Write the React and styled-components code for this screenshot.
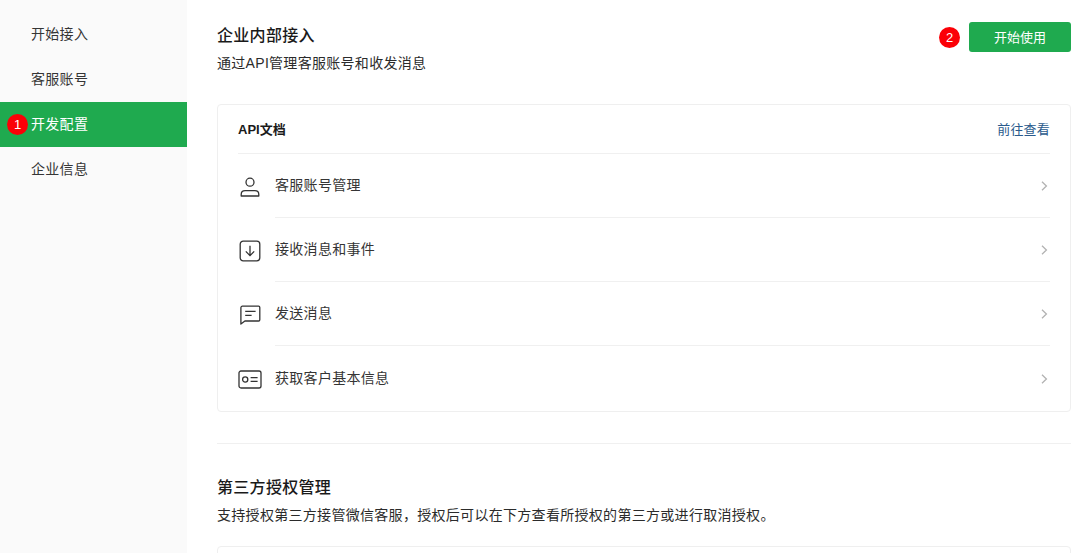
import styled, { createGlobalStyle } from "styled-components";

const GlobalStyle = createGlobalStyle`
  html, body {
    margin: 0;
    padding: 0;
    background: #fff;
    overflow: hidden;
  }
  body {
    font-family: "Liberation Sans", "Noto Sans CJK SC", sans-serif;
    color: #1a1a1a;
  }
`;

const navItems = ["开始接入", "客服账号", "开发配置", "企业信息"];

const apiRows = [
  { label: "客服账号管理", icon: <UserIcon /> },
  { label: "接收消息和事件", icon: <InboxIcon /> },
  { label: "发送消息", icon: <MessageIcon /> },
  { label: "获取客户基本信息", icon: <CardIcon /> },
];

function UserIcon() {
  return (
    <svg width="20" height="20" viewBox="0 0 20 20" fill="none" stroke="#333" strokeWidth="1.3">
      <circle cx="10" cy="5.2" r="4" />
      <path d="M1.2 19v-1.6c0-2.2 1.8-3.7 4-3.7h9.6c2.2 0 4 1.5 4 3.7V19z" strokeLinejoin="round" />
    </svg>
  );
}

function InboxIcon() {
  return (
    <svg width="22" height="22" viewBox="0 0 22 22" fill="none" stroke="#333" strokeWidth="1.3">
      <rect x="1.2" y="1.2" width="19.6" height="19.6" rx="3" />
      <path d="M11 5.8v9.4M6.8 11.4l4.2 4.2 4.2-4.2" />
    </svg>
  );
}

function MessageIcon() {
  return (
    <svg width="21" height="20" viewBox="0 0 21 20" fill="none" stroke="#333" strokeWidth="1.3">
      <path d="M2.4 1.2h16.2c.7 0 1.2.5 1.2 1.2v12.4c0 .7-.5 1.2-1.2 1.2H4.9l-4 3V2.7c0-.8.7-1.5 1.5-1.5z" strokeLinejoin="round" />
      <path d="M5.2 6.4h10.4M5.2 10.4h6.4" />
    </svg>
  );
}

function CardIcon() {
  return (
    <svg width="24" height="19" viewBox="0 0 24 19" fill="none" stroke="#333" strokeWidth="1.3">
      <rect x="1" y="1" width="22" height="17" rx="2" />
      <circle cx="7.2" cy="9.5" r="2.6" />
      <path d="M12.6 7.6h7M12.6 11.4h7" />
    </svg>
  );
}

export default function App() {
  return (
    <>
      <GlobalStyle />
      <Page>
        <Sidebar>
          {navItems.map((item, index) => (
            <NavItem key={item} $active={index === 2}>
              {index === 2 && <NavBadge>1</NavBadge>}
              {item}
            </NavItem>
          ))}
        </Sidebar>
        <Main>
          <SectionHead>
            <Intro>
              <Title>企业内部接入</Title>
              <Desc>通过API管理客服账号和收发消息</Desc>
            </Intro>
            <Actions>
              <Badge>2</Badge>
              <PrimaryButton>开始使用</PrimaryButton>
            </Actions>
          </SectionHead>
          <Card>
            <CardHead>
              <CardTitle>API文档</CardTitle>
              <CardLink>前往查看</CardLink>
            </CardHead>
            {apiRows.map((row) => (
              <Row key={row.label}>
                <RowIcon>{row.icon}</RowIcon>
                <RowBody>
                  {row.label}
                  <Chevron width="7" height="10" viewBox="0 0 7 10" fill="none" stroke="#b2b2b2" strokeWidth="1.3">
                    <path d="M1 .8 5.4 5 1 9.2" />
                  </Chevron>
                </RowBody>
              </Row>
            ))}
          </Card>
          <Divider />
          <Title>第三方授权管理</Title>
          <Desc>支持授权第三方接管微信客服，授权后可以在下方查看所授权的第三方或进行取消授权。</Desc>
          <NextCard />
        </Main>
      </Page>
    </>
  );
}

const Page = styled.div`
  display: flex;
  width: 1080px;
  height: 553px;
  overflow: hidden;
`;

const Sidebar = styled.nav`
  flex: none;
  width: 187px;
  padding-top: 12px;
  background: #fafafa;
  box-sizing: border-box;
`;

const NavItem = styled.div`
  position: relative;
  height: 45px;
  padding-left: 31px;
  line-height: 45px;
  font-size: 14px;
  letter-spacing: 0.3px;
  color: ${(p) => (p.$active ? "#fff" : "#353535")};
  background: ${(p) => (p.$active ? "#1faa4f" : "transparent")};
`;

const Badge = styled.span`
  display: block;
  width: 21px;
  height: 21px;
  border-radius: 50%;
  background: #fb0007;
  color: #fff;
  font-size: 13px;
  line-height: 21px;
  text-align: center;
  letter-spacing: 0;
`;

const NavBadge = styled(Badge)`
  position: absolute;
  left: 7px;
  top: 12px;
`;

const Main = styled.main`
  flex: 1;
  min-width: 0;
  padding: 22px 9px 0 30px;
`;

const SectionHead = styled.header`
  display: flex;
  justify-content: space-between;
  align-items: flex-start;
  height: 82px;
`;

const Intro = styled.div`
  padding-top: 1px;
`;

const Actions = styled.div`
  display: flex;
  align-items: center;
  gap: 9px;
`;

const PrimaryButton = styled.button`
  width: 102px;
  height: 30px;
  padding: 0 0 2px;
  border: 0;
  border-radius: 3px;
  background: #1faa4f;
  color: #fff;
  font: inherit;
  font-size: 13px;
`;

const Title = styled.h2`
  margin: 0;
  height: 26px;
  line-height: 26px;
  font-size: 16px;
  font-weight: 500;
  letter-spacing: 0.3px;
  color: #1a1a1a;
`;

const Desc = styled.p`
  margin: 0;
  padding-top: 1px;
  height: 26px;
  line-height: 26px;
  font-size: 14px;
  letter-spacing: 0.3px;
  color: #2b2b2b;
`;

const Card = styled.section`
  box-sizing: border-box;
  height: 308px;
  padding: 0 20px;
  border: 1px solid #efefef;
  border-radius: 4px;
`;

const CardHead = styled.div`
  display: flex;
  justify-content: space-between;
  align-items: center;
  height: 49px;
  padding-bottom: 1px;
  box-sizing: border-box;
  border-bottom: 1px solid #f0f0f0;
`;

const CardTitle = styled.span`
  font-size: 13px;
  font-weight: 600;
  color: #1a1a1a;
`;

const CardLink = styled.a`
  font-size: 13px;
  letter-spacing: 0.2px;
  color: #2a5a8c;
`;

const Row = styled.div`
  display: flex;
  align-items: stretch;
  height: 64px;
`;

const RowIcon = styled.span`
  display: flex;
  align-items: center;
  justify-content: center;
  flex: none;
  width: 24px;
  margin-right: 13px;
  padding-top: 2px;
`;

const RowBody = styled.div`
  flex: 1;
  display: flex;
  justify-content: space-between;
  align-items: center;
  padding-bottom: 4px;
  font-size: 14px;
  letter-spacing: 0.3px;
  color: #353535;
  border-bottom: 1px solid #f0f0f0;

  ${Row}:last-child & {
    padding-bottom: 2px;
    border-bottom: 0;
  }
`;

const Chevron = styled.svg`
  margin: 4px 2px 0 0;
`;

const Divider = styled.hr`
  margin: 31px 0 31px;
  height: 1px;
  border: 0;
  background: #f0f0f0;
`;

const NextCard = styled.div`
  margin-top: 18px;
  height: 40px;
  border: 1px solid #efefef;
  border-radius: 4px;
`;
